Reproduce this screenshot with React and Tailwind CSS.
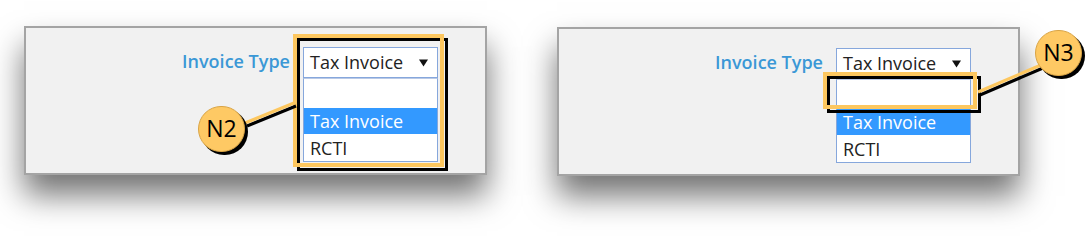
import React from "react";

const font = { fontFamily: '"Open Sans", "Noto Sans", sans-serif' };

function Caret() {
  return (
    <svg width="9" height="8" viewBox="0 0 9 8" className="block">
      <path d="M0 0.5 L9 0.5 L4.5 7.5 Z" fill="#111" />
    </svg>
  );
}

function Dropdown({ children }) {
  return (
    <div className="relative w-[135px]">
      <div className="h-[31px] w-[135px] border border-[#86a7dc] bg-white flex items-center justify-between pl-[6px] pr-[9px] text-[18px] text-[#222] leading-none">
        <span className="pb-[1px]">Tax Invoice</span>
        <Caret />
      </div>
      <div className="absolute left-0 top-[31px] w-[135px] border border-[#86a7dc] border-t-[#b9c9e6] bg-white text-[18px] leading-none">
        <div className="h-[29px]" />
        <div className="h-[26px] bg-[#3399ff] text-white flex items-center pl-[6px]">Tax Invoice</div>
        <div className="h-[27px] text-[#222] flex items-center pl-[6px]">RCTI</div>
      </div>
      {children}
    </div>
  );
}

function GoldBox({ className }) {
  return (
    <div className={"absolute " + className}>
      <div className="absolute left-[4px] top-[4px] right-[-4px] bottom-[-4px] border-[3px] border-black" />
      <div className="absolute inset-0 border-[4px] border-[#fdc75f]" />
    </div>
  );
}

function Badge({ label, className }) {
  return (
    <div
      className={
        "absolute w-[47px] h-[46px] rounded-full bg-[#fec964] border border-[#d9a445] shadow-[3px_3px_0_#000] flex items-center justify-center text-[23px] text-black leading-none " +
        className
      }
    >
      <span className="pb-[1px]">{label}</span>
    </div>
  );
}

function Panel({ className, children, dropdownChildren }) {
  return (
    <div
      className={
        "relative w-[463px] h-[149px] shrink-0 border-2 border-[#a4a4a4] bg-[#f1f1f1] shadow-[0_20px_30px_rgba(0,0,0,0.55)] " +
        className
      }
    >
      <div className="flex items-start pt-[19px]">
        <div className="w-[264px] text-right text-[18px] font-semibold text-[#3b98d6] leading-[28px]">
          Invoice Type
        </div>
        <div className="ml-[13px]">
          <Dropdown>{dropdownChildren}</Dropdown>
        </div>
      </div>
      {children}
    </div>
  );
}

export default function App() {
  return (
    <div className="w-[1091px] h-[236px] bg-white overflow-hidden" style={font}>
      <div className="flex items-start">
        <Panel
          className="ml-[24px] mt-[26px]"
          dropdownChildren={<GoldBox className="left-[-10px] top-[-13px] w-[151px] h-[133px]" />}
        >
          <svg className="absolute left-0 top-0 overflow-visible" width="463" height="149">
            <line x1="221" y1="98" x2="270" y2="78" stroke="#000" strokeWidth="3" />
            <line x1="219" y1="95" x2="268" y2="75" stroke="#fdc75f" strokeWidth="3" />
          </svg>
          <Badge label="N2" className="left-[172px] top-[78px]" />
        </Panel>
        <Panel
          className="ml-[70px] mt-[27px]"
          dropdownChildren={<GoldBox className="left-[-13px] top-[24px] w-[154px] h-[37px]" />}
        >
          <svg className="absolute left-0 top-0 overflow-visible" width="463" height="149">
            <line x1="421" y1="66" x2="484" y2="39" stroke="#000" strokeWidth="3" />
            <line x1="419" y1="63" x2="482" y2="36" stroke="#fdc75f" strokeWidth="3" />
          </svg>
          <Badge label="N3" className="left-[476px] top-[1px]" />
        </Panel>
      </div>
    </div>
  );
}
